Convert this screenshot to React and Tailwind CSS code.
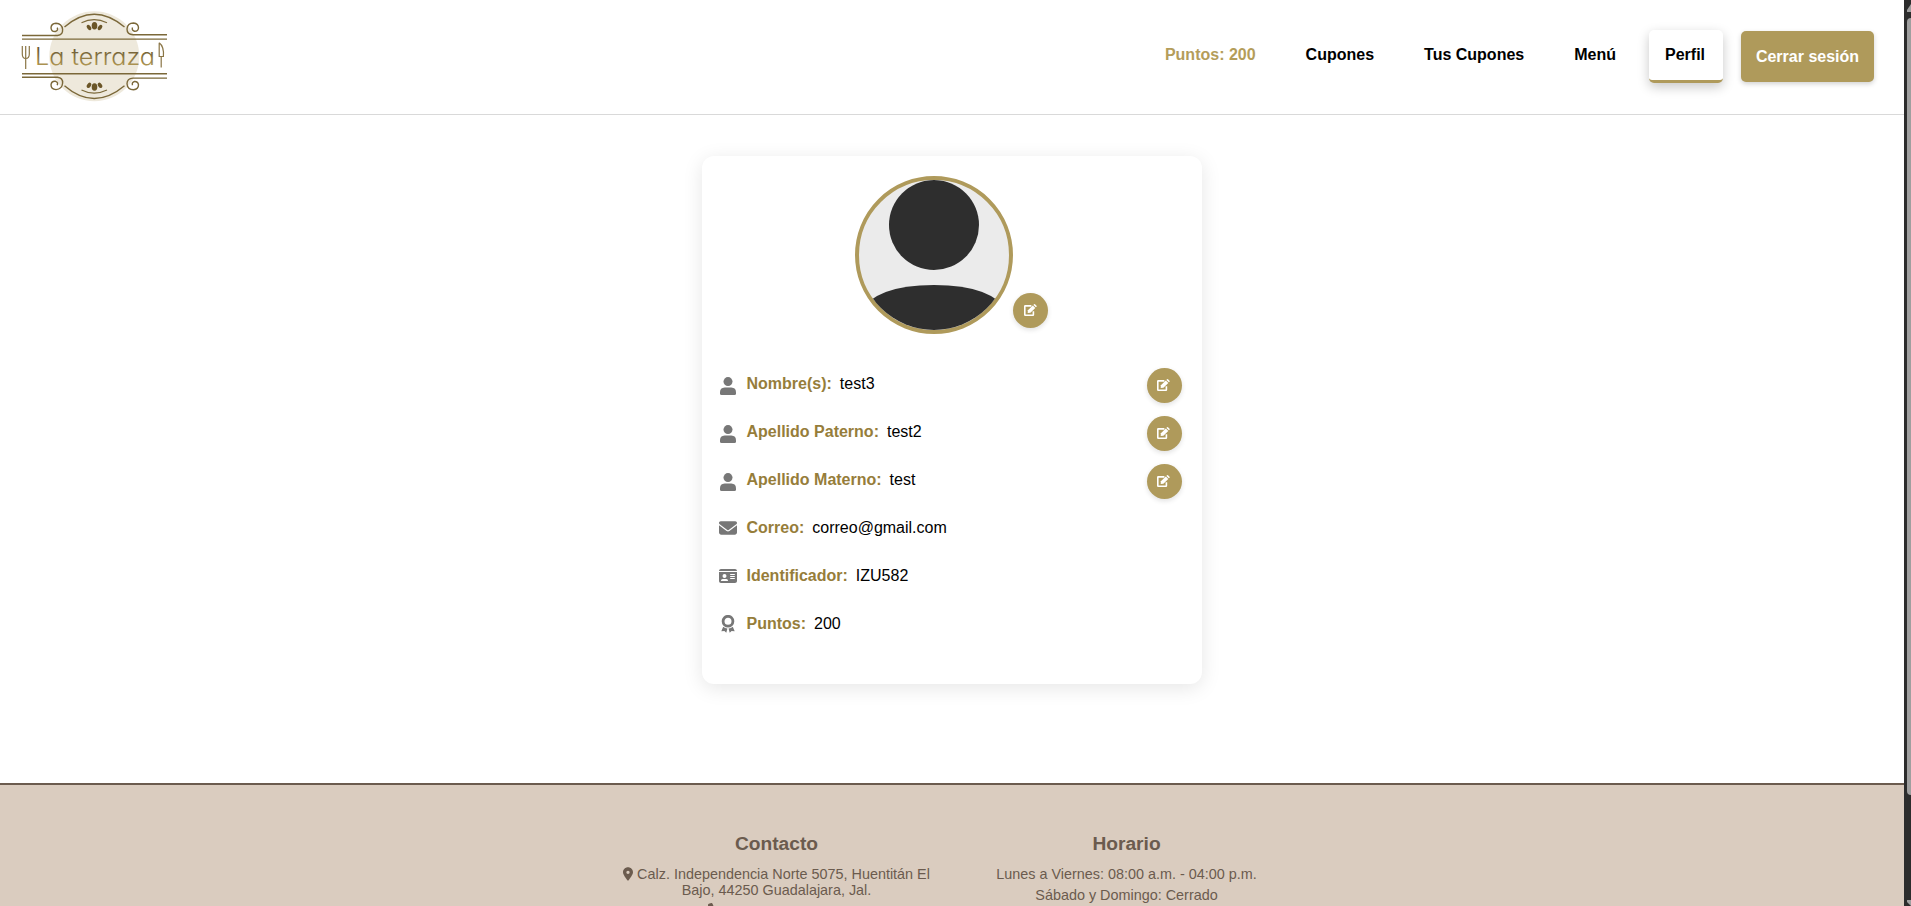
import React from "react";
import { FaEnvelope, FaIdCard, FaLocationDot, FaPhone } from "react-icons/fa6";

function Ornament() {
  return (
    <g fill="none" stroke="#7b6839" strokeWidth="1.4">
      <path d="M22 35.5H57.5Q63 35 62.6 29.5Q62 23.5 56 23.2Q51 23.5 51 28Q51.500 32 55.500 31.500Q58.500 30.500 57.200 27.600" />
      <path d="M167 34.700H133Q127 34.500 127 29Q127.500 23 133.500 23Q138.500 23.500 138.500 28Q138 31.500 134.500 31.300Q131.500 30.500 132.500 27.500" />
      <path d="M22 39.100H167" />
      <path d="M64.500 27Q94 1.500 124.500 27" />
      <path d="M81.500 22.800Q94 16.500 107 22.800" strokeWidth="1.100" />
      <g fill="#6b5627" stroke="none">
        <ellipse cx="94.500" cy="25.800" rx="2.800" ry="3.800" />
        <ellipse cx="89" cy="27.500" rx="1.900" ry="2.900" transform="rotate(-35 89 27.500)" />
        <ellipse cx="100" cy="27.500" rx="1.900" ry="2.900" transform="rotate(35 100 27.500)" />
      </g>
    </g>
  );
}

function Logo() {
  return (
    <svg width="200" height="114" viewBox="0 0 200 114" className="block shrink-0">
      <defs>
        <linearGradient id="gold" x1="0" y1="0" x2="0" y2="1">
          <stop offset="0.250" stopColor="#6b5a34" />
          <stop offset="0.850" stopColor="#b39a55" />
        </linearGradient>
      </defs>
      <circle cx="94.300" cy="56.300" r="45" fill="#eee9dc" />
      <Ornament />
      <g transform="matrix(1 0 0 -1 0 112.800)">
        <Ornament />
      </g>
      <g fill="none" stroke="#8a7545" strokeWidth="1.200">
        <path d="M22.300 46V54Q22.300 58.500 25.700 58.500Q29.300 58.500 29.300 54V46M25.700 46V69" />
        <path d="M159.200 42.800V56.500H163.400Q164.200 46.500 159.200 42.800M161.200 56.500V67.500" />
      </g>
      <text x="35" y="65" textLength="120" lengthAdjust="spacingAndGlyphs" fill="url(#gold)" className="font-['Inter',sans-serif] text-[23.5px] font-light [font-feature-settings:'cv11']">
        La terraza
      </text>
    </svg>
  );
}

function UserIcon() {
  return (
    <svg width="16" height="18" viewBox="0 0 16 18" fill="currentColor">
      <circle cx="8" cy="4.600" r="4.500" />
      <path d="M4.600 10.400H11.400Q16 10.600 16 15.300V16.500Q16 18 14.500 18H1.500Q0 18 0 16.500V15.300Q0 10.600 4.600 10.400Z" />
    </svg>
  );
}

function AwardIcon() {
  return (
    <svg width="14" height="18" viewBox="0 0 14 18" fill="currentColor">
      <circle cx="7" cy="6.200" r="4.900" fill="none" stroke="currentColor" strokeWidth="2.800" />
      <path d="M2.200 11.800Q4 13.600 6.400 13.600L5.300 17.700L3.400 16L0.300 16.300Z" />
      <path d="M11.800 11.800Q10 13.600 7.600 13.600L8.700 17.700L10.600 16L13.700 16.300Z" />
    </svg>
  );
}

function PencilSquare() {
  return (
    <svg width="13" height="12" viewBox="0 0 13 12" fill="currentColor">
      <path d="M7.400 1.900H1.200Q0.800 1.900 0.800 2.300V10.800Q0.800 11.200 1.200 11.200H9Q9.400 11.200 9.400 10.800V7.200" fill="none" stroke="currentColor" strokeWidth="1.600" />
      <path d="M3.900 6.300L8.800 1.400L11.300 3.900L6.400 8.800L3.700 9.100Z" />
      <path d="M9.400 0.900L10 0.300Q10.500 -0.100 11 0.300L12.500 1.700Q13 2.200 12.500 2.700L11.900 3.300Z" />
    </svg>
  );
}

function Avatar() {
  return (
    <div className="size-[158px] shrink-0 overflow-hidden rounded-full border-4 border-[#af9a5b] bg-[#ebebeb]">
      <svg width="150" height="150" viewBox="0 0 150 150" className="block" fill="#2e2e2e">
        <circle cx="75" cy="45" r="45" />
        <path d="M-5 150Q0 105 75 105Q150 105 155 150Z" />
      </svg>
    </div>
  );
}

function EditButton({ className = "" }) {
  return (
    <button className={"flex size-[35px] shrink-0 items-center justify-center rounded-full bg-[#af9a5b] pb-px text-white shadow-[0_2px_5px_rgba(0,0,0,0.12)] " + className}>
      <PencilSquare />
    </button>
  );
}

const fields = [
  { icon: UserIcon, label: "Nombre(s):", value: "test3", editable: true },
  { icon: UserIcon, label: "Apellido Paterno:", value: "test2", editable: true },
  { icon: UserIcon, label: "Apellido Materno:", value: "test", editable: true },
  { icon: FaEnvelope, label: "Correo:", value: "correo@gmail.com" },
  { icon: FaIdCard, label: "Identificador:", value: "IZU582" },
  { icon: AwardIcon, label: "Puntos:", value: "200" },
];

function Field({ icon: Icon, label, value, editable }) {
  return (
    <div className="flex h-12 items-center">
      <div className={"flex w-[18px] justify-center text-[#777] " + (editable ? "pt-1" : "")}>
        <Icon size={18} />
      </div>
      <span className="ml-[9.5px] font-bold text-[#967d3a]">{label}</span>
      <span className="ml-2 text-black">{value}</span>
      {editable && <EditButton className="mt-[3px] ml-auto pr-[2px]" />}
    </div>
  );
}

export default function App() {
  return (
    <div className="flex h-[906px] w-[1911px] overflow-hidden bg-white font-['Liberation_Sans',Arial,sans-serif] text-base">
      <div className="flex w-[1904px] shrink-0 flex-col">
        <header className="flex h-[115px] shrink-0 items-start justify-between border-b border-[#d9d9d9] pr-[30px]">
          <Logo />
          <nav className="flex items-start pt-[30px] leading-5 font-bold text-black">
            <a className="mr-[18px] px-4 pt-[15px] text-[#b49d5a]">Puntos: 200</a>
            <a className="mr-[18px] px-4 pt-[15px]">Cupones</a>
            <a className="mr-[18px] px-4 pt-[15px]">Tus Cupones</a>
            <a className="mr-[17px] px-4 pt-[15px]">Menú</a>
            <a className="mr-[18px] h-[53px] w-[74px] rounded-[5px] border-b-[3px] border-[#af9a5b] bg-white px-4 pt-[15px] shadow-[0_4px_12px_rgba(0,0,0,0.22)]">Perfil</a>
            <button className="mt-px h-[51px] w-[133px] rounded-[5px] bg-[#af9a5b] font-bold text-white shadow-[0_2px_5px_rgba(0,0,0,0.18)]">Cerrar sesión</button>
          </nav>
        </header>
        <main className="flex h-[668px] shrink-0 justify-center pt-[41px]">
          <section className="h-[528px] w-[500px] rounded-xl bg-white pt-5 pr-5 pl-[17px] shadow-[0_4px_20px_rgba(0,0,0,0.1)]">
            <div className="flex h-[184px] items-start pl-[136px]">
              <Avatar />
              <EditButton className="mt-[117px]" />
            </div>
            {fields.map((field) => (
              <Field key={field.label} {...field} />
            ))}
          </section>
        </main>
        <footer className="flex h-[123px] shrink-0 justify-center gap-5 overflow-hidden border-t-2 border-[#6b5b4e] bg-[#daccbf] pt-[47px] pr-px text-center text-[14.4px] leading-4 text-[#6b5b4e]">
          <div className="w-[330px]">
            <h3 className="text-[19.2px] leading-6 font-bold">Contacto</h3>
            <p className="mt-[10px]">
              <FaLocationDot className="mr-1 inline h-[14px] w-[10px] align-[-2px]" />
              Calz. Independencia Norte 5075, Huentitán El
              <br />
              Bajo, 44250 Guadalajara, Jal.
            </p>
            <FaPhone className="mt-[5px] ml-[96px] size-[14px]" />
          </div>
          <div className="w-[330px]">
            <h3 className="text-[19.2px] leading-6 font-bold">Horario</h3>
            <p className="mt-[10px]">Lunes a Viernes: 08:00 a.m. - 04:00 p.m.</p>
            <p className="mt-[5px]">Sábado y Domingo: Cerrado</p>
          </div>
        </footer>
      </div>
      <div className="flex w-[7px] shrink-0 flex-col justify-between overflow-hidden bg-[#2c2c2c] pl-[3px]">
        <svg width="4" height="12" viewBox="0 0 4 12" fill="#9f9f9f"><path d="M4 4V12H0V10Z" /></svg>
        <div className="mt-[6px] h-[777px] w-2 rounded-full bg-[#9f9f9f]" />
        <svg width="4" height="6" viewBox="0 0 4 6" className="mt-auto" fill="#9f9f9f"><path d="M0 0H4V6L0 2Z" /></svg>
      </div>
    </div>
  );
}
